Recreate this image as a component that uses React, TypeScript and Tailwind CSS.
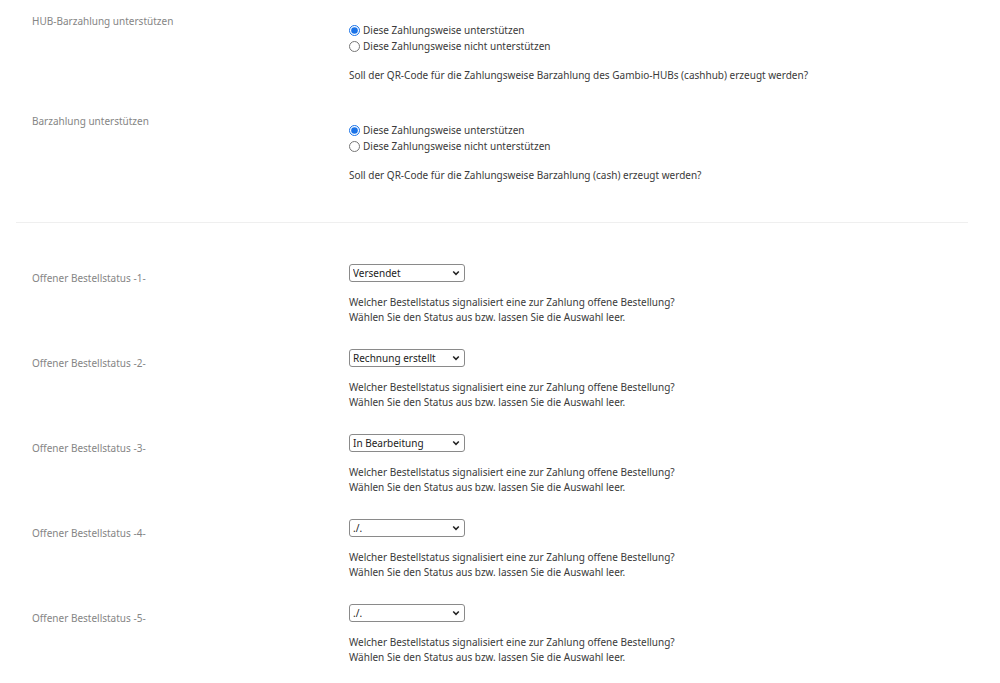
import { useState } from 'react'

const statusRows = [
	{ id: 1, value: 'Versendet' },
	{ id: 2, value: 'Rechnung erstellt' },
	{ id: 3, value: 'In Bearbeitung' },
	{ id: 4, value: './.' },
	{ id: 5, value: './.' },
]

const statusOptions = ['./.', 'Offen', 'In Bearbeitung', 'Versendet', 'Rechnung erstellt', 'Storniert']

function Chevron() {
	return (
		<svg
			viewBox="0 0 10 10"
			className="pointer-events-none absolute right-[5px] top-1/2 h-[8px] w-[8px] -translate-y-1/2"
		>
			<path d="M1.5 3.2 L5 6.7 L8.5 3.2" fill="none" stroke="#222" strokeWidth="1.9" />
		</svg>
	)
}

interface RadioSectionProps {
	name: string
	label: string
	description: string
}

function RadioSection({ name, label, description }: RadioSectionProps) {
	const [enabled, setEnabled] = useState(true)

	return (
		<div className="grid grid-cols-[317px_1fr] pl-8 pb-[32px]">
			<div className="text-[10px] leading-[14px] text-[#858585]">{label}</div>
			<div className="pt-[8px] text-[10px] text-[#3a3a3a]">
				<label className="flex h-4 items-center">
					<input
						type="radio"
						name={name}
						checked={enabled}
						onChange={() => setEnabled(true)}
						className="m-0 mr-[3px] h-[11px] w-[11px] accent-[#1a73e8]"
					/>
					Diese Zahlungsweise unterstützen
				</label>
				<label className="flex h-4 items-center">
					<input
						type="radio"
						name={name}
						checked={!enabled}
						onChange={() => setEnabled(false)}
						className="m-0 mr-[3px] h-[11px] w-[11px] accent-[#1a73e8]"
					/>
					Diese Zahlungsweise nicht unterstützen
				</label>
				<p className="mt-[14px] leading-[14px]">{description}</p>
			</div>
		</div>
	)
}

function StatusRow({ id, value }: { id: number; value: string }) {
	return (
		<div className="grid grid-cols-[317px_1fr] pl-8 pb-[24px]">
			<div className="pt-[7px] text-[10px] leading-[14px] text-[#858585]">
				Offener Bestellstatus -{id}-
			</div>
			<div className="text-[10px] text-[#3a3a3a]">
				<div className="relative w-[116px]">
					<select
						defaultValue={value}
						className="block h-[18px] w-full appearance-none rounded-[3px] border border-[#8a8a8a] bg-white pl-[3px] pr-4 text-[10px] leading-[16px] text-[#222] outline-none"
					>
						{statusOptions.map((option) => (
							<option key={option} value={option}>
								{option}
							</option>
						))}
					</select>
					<Chevron />
				</div>
				<p className="mt-[13px] leading-[15px]">
					Welcher Bestellstatus signalisiert eine zur Zahlung offene Bestellung?
					<br />
					Wählen Sie den Status aus bzw. lassen Sie die Auswahl leer.
				</p>
			</div>
		</div>
	)
}

export default function App() {
	return (
		<div className="min-h-[683px] bg-white pt-[14px] font-['Noto_Sans',sans-serif]">
			<RadioSection
				name="cashhub"
				label="HUB-Barzahlung unterstützen"
				description="Soll der QR-Code für die Zahlungsweise Barzahlung des Gambio-HUBs (cashhub) erzeugt werden?"
			/>
			<RadioSection
				name="cash"
				label="Barzahlung unterstützen"
				description="Soll der QR-Code für die Zahlungsweise Barzahlung (cash) erzeugt werden?"
			/>
			<hr className="ml-4 mr-8 mt-[8px] mb-[41px] border-0 border-t border-[#efefef]" />
			{statusRows.map((row) => (
				<StatusRow key={row.id} id={row.id} value={row.value} />
			))}
		</div>
	)
}
